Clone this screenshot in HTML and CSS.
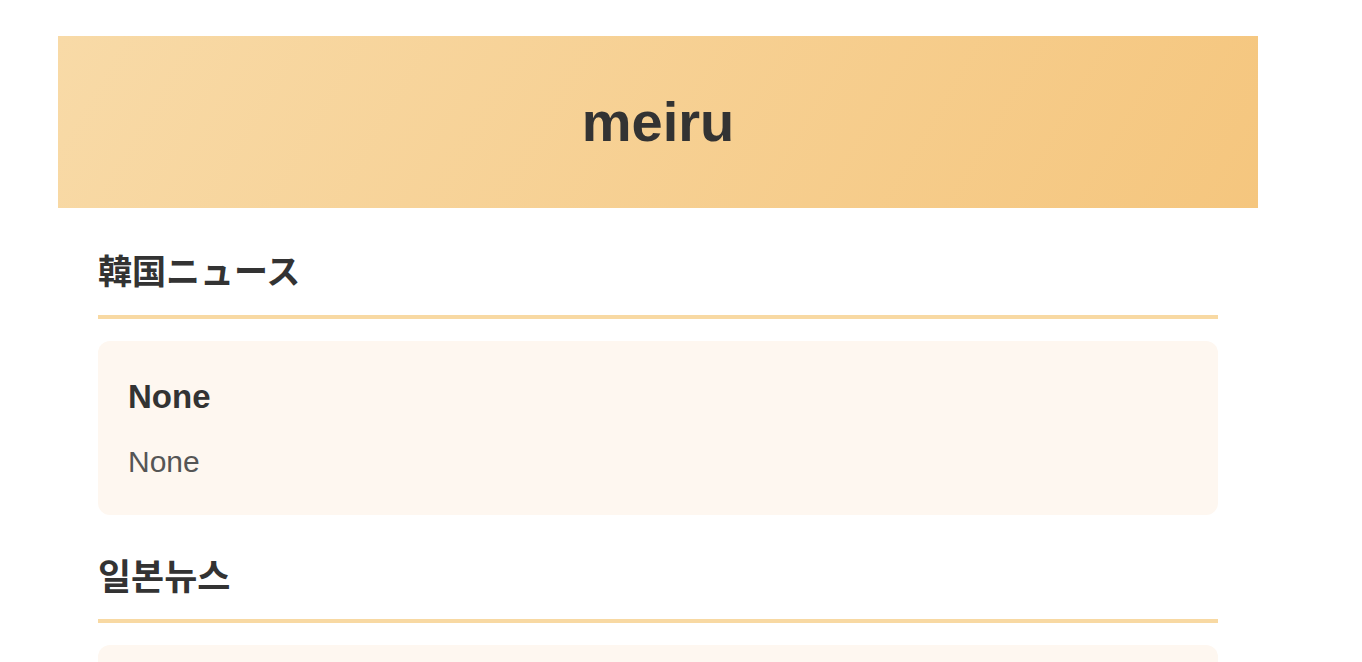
FILE: index.html
```html
<!DOCTYPE html>
<html lang="ja">
<head>
<meta charset="utf-8">
<title>meiru</title>
<link rel="stylesheet" href="styles.css">
</head>
<body>
<div class="container">
  <header class="header">
    <h1 class="title">meiru</h1>
  </header>
  <main class="content">
    <section class="section">
      <h2 class="section-title ja">韓国ニュース</h2>
      <div class="card">
        <h3 class="card-title">None</h3>
        <p class="card-text">None</p>
      </div>
    </section>
    <section class="section">
      <h2 class="section-title ko">일본뉴스</h2>
      <div class="card">
        <h3 class="card-title">None</h3>
        <p class="card-text">None</p>
      </div>
    </section>
  </main>
</div>
</body>
</html>
```

FILE: styles.css
```css
html, body {
  margin: 0;
  padding: 0;
  background: #ffffff;
}

body {
  font-family: "Liberation Sans", Arial, "Noto Sans CJK JP", sans-serif;
  color: #333333;
}

.container {
  width: 1200px;
  margin: 36px 0 0 58px;
}

.header {
  height: 172px;
  background: linear-gradient(120deg, #f8daa7 0%, #f5c67e 100%);
  display: flex;
  align-items: center;
  justify-content: center;
}

.title {
  margin: 0;
  font-size: 56px;
  font-weight: 700;
  color: #333333;
  line-height: 1;
}

.content {
  padding: 40px 40px;
}

.section {
  margin-bottom: 37px;
}

.section-title {
  margin: 0 0 22px;
  font-size: 34px;
  line-height: 44px;
  font-weight: 700;
  color: #333333;
  padding-bottom: 23px;
  border-bottom: 4px solid #f8d9a3;
}

.section-title.ja {
  font-family: "Noto Sans CJK JP", sans-serif;
}

.section-title.ko {
  font-family: "Noto Sans CJK KR", sans-serif;
  font-size: 36px;
}

.card {
  background: #fef7f0;
  border-radius: 12px;
  padding: 36px 30px 30px;
  height: 174px;
  box-sizing: border-box;
}

.card-title {
  margin: 0 0 25px;
  font-size: 33px;
  line-height: 40px;
  font-weight: 700;
  color: #333333;
}

.card-text {
  margin: 0;
  font-size: 30px;
  line-height: 40px;
  color: #555555;
}
```
